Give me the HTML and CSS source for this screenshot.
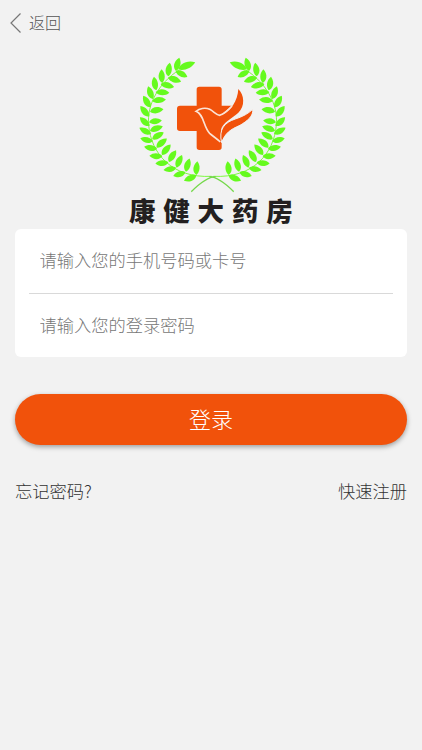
FILE: index.html
```html
<!DOCTYPE html>
<html lang="zh-CN">
<head>
    <meta charset="UTF-8">
    <meta name="viewport" content="width=device-width, initial-scale=1.0">
    <title>登录</title>
    <link rel="stylesheet" href="styles.css">
</head>
<body>
    <div class="header">
        <a class="back" href="#">
            <svg class="back-icon" width="12" height="22" viewBox="0 0 12 22"><path d="M10.5 1.5L1 11l9.5 9.5"/></svg>
            <span>返回</span>
        </a>
    </div>
    <div class="logo">
        <svg class="logo-mark" width="165" height="145" viewBox="0 0 495 435">
            <defs>
                <path id="leaf" d="M0 0C6-11 25-16 41 0C28 12 9 10 0 0Z"/>
                <g id="branch">
                    <path class="stem" d="M147 60C85 100 50 165 56 225C63 310 125 385 245 379"/>
                    <path class="stalk" d="M238 380C265 381 290 404 311 425"/>
                    <use href="#leaf" transform="translate(145 58) rotate(-23) scale(1.34 1.1)"/>
                    <!-- outer leaves -->
                    <use href="#leaf" transform="translate(138 63) rotate(-76)"/>
                    <use href="#leaf" transform="translate(115 79) rotate(-84)"/>
                    <use href="#leaf" transform="translate(97 99) rotate(-93)"/>
                    <use href="#leaf" transform="translate(79 121) rotate(-100)"/>
                    <use href="#leaf" transform="translate(69 147) rotate(-111)"/>
                    <use href="#leaf" transform="translate(62 172) rotate(-123)"/>
                    <use href="#leaf" transform="translate(58 199) rotate(-131)"/>
                    <use href="#leaf" transform="translate(59 227) rotate(-139) scale(.95)"/>
                    <use href="#leaf" transform="translate(63 251) rotate(-153) scale(.95)"/>
                    <use href="#leaf" transform="translate(69 273) rotate(-168) scale(.95)"/>
                    <use href="#leaf" transform="translate(81 296) rotate(-172) scale(.95)"/>
                    <use href="#leaf" transform="translate(97 318) rotate(-179) scale(.95)"/>
                    <use href="#leaf" transform="translate(115 337) rotate(-185) scale(.95)"/>
                    <use href="#leaf" transform="translate(138 353) rotate(-191) scale(.93)"/>
                    <use href="#leaf" transform="translate(166 366) rotate(-198) scale(.93)"/>
                    <use href="#leaf" transform="translate(199 375) rotate(-205)"/>
                    <!-- inner leaves -->
                    <use href="#leaf" transform="translate(137 64) rotate(26) scale(.95)"/>
                    <use href="#leaf" transform="translate(114 83) rotate(17)"/>
                    <use href="#leaf" transform="translate(92 103) rotate(11)"/>
                    <use href="#leaf" transform="translate(77 127) rotate(2)"/>
                    <use href="#leaf" transform="translate(67 153) rotate(-6)"/>
                    <use href="#leaf" transform="translate(60 185) rotate(-10)"/>
                    <use href="#leaf" transform="translate(57 217) rotate(-8) scale(.95)"/>
                    <use href="#leaf" transform="translate(60 243) rotate(-20)"/>
                    <use href="#leaf" transform="translate(67 268) rotate(-31) scale(.97)"/>
                    <use href="#leaf" transform="translate(80 293) rotate(-42)"/>
                    <use href="#leaf" transform="translate(96 315) rotate(-51)"/>
                    <use href="#leaf" transform="translate(117 336) rotate(-59)"/>
                    <use href="#leaf" transform="translate(140 353) rotate(-67)"/>
                    <use href="#leaf" transform="translate(168 365) rotate(-75)"/>
                    <use href="#leaf" transform="translate(199 375) rotate(-86)"/>
                </g>
            </defs>
            <use href="#branch"/>
            <use href="#branch" transform="translate(495 0) scale(-1 1)"/>
            <!-- cross -->
            <path class="cross" d="M208 110H267Q275 110 275 118V167H305L270 197L275 276V292Q275 300 267 300H208Q200 300 200 292V243H150Q141 243 141 235V176Q141 167 150 167H200V118Q200 110 208 110Z"/>
            <!-- dove -->
            <path class="bird" d="M198 184C208 176 225 171 239 178C251 184 259 195 269 197C303 186 323 151 325 117C343 134 346 169 325 188C307 204 277 219 273 239C269 255 274 265 271 275C262 267 249 259 239 250C220 231 222 204 198 184Z"/>
            <path class="bird-line" d="M306 168C294 182 283 191 269 196C259 195 251 184 239 178C225 171 208 176 198 184C222 192 220 231 239 250C249 259 262 267 271 276"/>
            <path class="wing" d="M275 278C265 238 284 217 316 207C338 200 356 190 368 178C371 198 352 213 330 226C302 238 285 249 275 278Z"/>
        </svg>
        <h1 class="logo-name">康健大药房</h1>
    </div>
    <form class="login-form">
        <div class="fields">
            <input type="text" placeholder="请输入您的手机号码或卡号">
            <input type="password" placeholder="请输入您的登录密码">
        </div>
        <button class="btn" type="button">登录</button>
        <div class="links">
            <a href="#">忘记密码?</a>
            <a href="#">快速注册</a>
        </div>
    </form>
</body>
</html>
```

FILE: styles.css
```css
* {
    box-sizing: border-box;
}
body {
    margin: 0;
    min-height: 750px;
    background-color: #f2f2f2;
    font-family: "Noto Sans CJK SC", sans-serif;
    font-weight: 300;
}
a {
    color: #333;
    text-decoration: none;
}
.header {
    height: 50px;
    padding: 12px 10px;
}
.back {
    display: flex;
    align-items: center;
    gap: 7px;
    height: 22px;
    color: #555;
    font-size: 16px;
    line-height: 20px;
}
.back span {
    padding-bottom: 2px;
}
.back-icon {
    fill: none;
    stroke: #777;
    stroke-width: 1.2;
}
.logo {
    height: 179px;
    padding-left: 129px;
}
.logo-mark {
    display: block;
    margin-left: 1px;
}
.stem {
    fill: none;
    stroke: #66fa1e;
    stroke-width: 2.5;
}
.stalk {
    fill: none;
    stroke: #74d84a;
    stroke-width: 4;
}
#leaf {
    fill: #66fa1e;
}
.cross {
    fill: #f1520b;
}
.bird {
    fill: #f1520b;
}
.bird-line {
    fill: none;
    stroke: #fbe3d5;
    stroke-width: 5;
}
.wing {
    fill: #f1520b;
    stroke: #f2f2f2;
    stroke-width: 3;
}
.logo-name {
    margin: 0;
    color: #231f20;
    font-size: 26.5px;
    font-weight: 900;
    line-height: 30px;
    letter-spacing: 7.8px;
    white-space: nowrap;
}
.login-form {
    padding: 0 15px;
}
.fields {
    height: 128px;
    padding: 0 14px;
    border-radius: 6px;
    background: #fff;
}
.fields input {
    display: block;
    width: 100%;
    height: 64px;
    padding: 0 11px 3px 10.5px;
    border: none;
    outline: none;
    background: none;
    font: inherit;
    font-size: 17.25px;
}
.fields input:first-child {
    height: 65px;
    border-bottom: 1px solid #d9d9d9;
}
.fields input::placeholder {
    color: #777;
}
.btn {
    display: block;
    width: 100%;
    height: 51px;
    margin-top: 37px;
    padding: 0 0 3px;
    border: none;
    border-radius: 26px;
    background-color: #f1520b;
    box-shadow: 0 2px 5px rgba(0, 0, 0, 0.35);
    color: #fff;
    font: inherit;
    font-size: 22px;
}
.links {
    display: flex;
    justify-content: space-between;
    margin-top: 33px;
    font-size: 17.25px;
    line-height: 26px;
}
```
